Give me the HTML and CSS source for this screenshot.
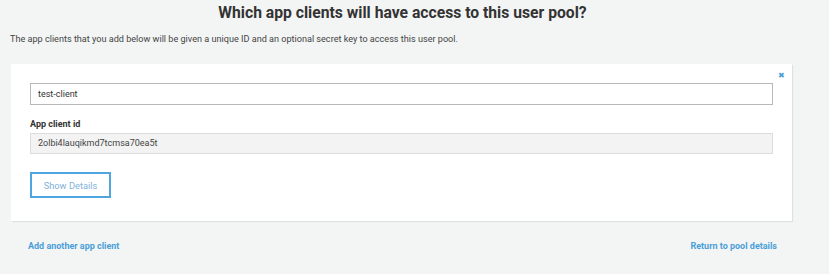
FILE: index.html
```html
<!DOCTYPE html>
<html lang="en">
<head>
  <meta charset="UTF-8" />
  <title>App clients</title>
  <link rel="stylesheet" href="styles.css">
</head>
<body>

  <div class="clients-page">
    <h2>Which app clients will have access to this user pool?</h2>
    <p class="intro">The app clients that you add below will be given a unique ID and an optional secret key to access this user pool.</p>

    <!-- One app client card -->
    <div class="client-card">
      <span class="remove-btn">&#10006;</span>
      <input type="text" class="client-name" value="test-client" />

      <label class="field-label">App client id</label>
      <div class="client-id">2olbi4lauqikmd7tcmsa70ea5t</div>

      <button class="details-btn">Show Details</button>
    </div>

    <!-- Footer links -->
    <div class="page-links">
      <a href="#">Add another app client</a>
      <a href="#">Return to pool details</a>
    </div>
  </div>

</body>
</html>
```

FILE: styles.css
```css
/* Page */
body {
  margin: 0;
  font-family: Roboto, 'Noto Sans', sans-serif;
  background-color: #f3f5f5;
  color: #444;
}

.clients-page {
  width: 781px;
  padding: 3px 0 0 11px;
}

/* Heading */
.clients-page h2 {
  margin: 0;
  padding-left: 2px;
  font-size: 15.7px;
  font-weight: 700;
  color: #333;
  text-align: center;
  line-height: 20px;
}

.intro {
  margin: 10px 0 0 -1px;
  font-size: 9.1px;
  line-height: 12px;
  color: #444;
}

/* Card */
.client-card {
  position: relative;
  margin-top: 19px;
  background-color: #fff;
  box-shadow: 1px 1px 1px rgba(0, 0, 0, 0.08);
  padding: 19px 19px 23px 19px;
}

.remove-btn {
  position: absolute;
  top: 7px;
  right: 7px;
  font-size: 8px;
  color: #4a9fd8;
}

.client-name {
  display: block;
  box-sizing: border-box;
  width: 100%;
  height: 22px;
  margin: 0;
  padding: 0 7px;
  border: 1px solid #b8b8b8;
  border-radius: 0;
  font-family: Roboto, sans-serif;
  font-size: 9px;
  color: #333;
  outline: none;
}

.field-label {
  display: block;
  margin-top: 14px;
  font-size: 9px;
  font-weight: 700;
  line-height: 11px;
  color: #333;
}

.client-id {
  margin-top: 3px;
  height: 19px;
  padding: 0 7px;
  border: 1px solid #dcdcdc;
  background-color: #f3f3f3;
  font-size: 9px;
  line-height: 19px;
  color: #444;
}

/* Button */
.details-btn {
  display: block;
  margin-top: 18px;
  width: 81px;
  height: 26px;
  background: #fff;
  border: 2px solid #4ea5e0;
  border-radius: 0;
  font-family: Roboto, sans-serif;
  font-size: 9.3px;
  color: #7fb2dc;
  cursor: pointer;
}

/* Links */
.page-links {
  display: flex;
  justify-content: space-between;
  padding: 20px 15px 0 17px;
}

.page-links a {
  font-size: 9px;
  font-weight: 700;
  line-height: 11px;
  color: #4a9fd8;
  text-decoration: none;
}
```
